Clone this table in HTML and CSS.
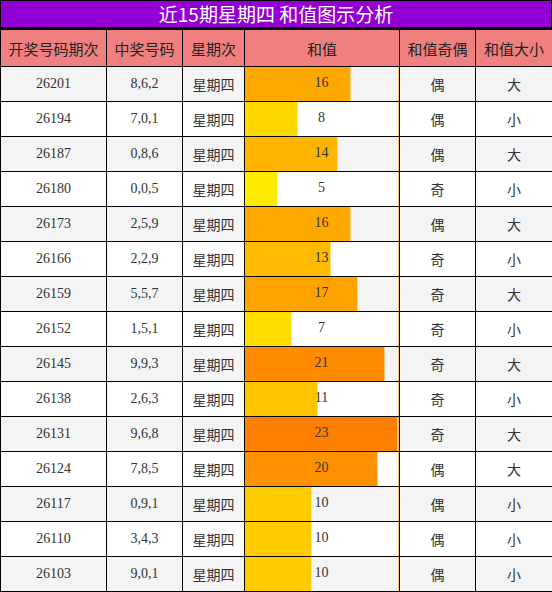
FILE: index.html
```html
<!DOCTYPE html>
<html lang="zh-CN">

<head>
  <meta charset="UTF-8">
  <title>近15期星期四 和值图示分析</title>
  <link rel="stylesheet" href="styles.css">
</head>

<body>
  <div class="board">
    <div class="title">近15期星期四 和值图示分析</div>
    <table class="stats">
      <colgroup>
        <col class="c-issue">
        <col class="c-code">
        <col class="c-day">
        <col class="c-sum">
        <col class="c-odd">
        <col class="c-size">
      </colgroup>
      <thead>
        <tr>
          <th>开奖号码期次</th>
          <th>中奖号码</th>
          <th>星期次</th>
          <th>和值</th>
          <th>和值奇偶</th>
          <th>和值大小</th>
        </tr>
      </thead>
      <tbody>
        <tr>
          <td class="num">26201</td><td class="num">8,6,2</td><td>星期四</td>
          <td class="sum"><div class="track"><span class="bar" style="--v:16"></span><span class="val">16</span></div></td>
          <td>偶</td><td>大</td>
        </tr>
        <tr>
          <td class="num">26194</td><td class="num">7,0,1</td><td>星期四</td>
          <td class="sum"><div class="track"><span class="bar" style="--v:8"></span><span class="val">8</span></div></td>
          <td>偶</td><td>小</td>
        </tr>
        <tr>
          <td class="num">26187</td><td class="num">0,8,6</td><td>星期四</td>
          <td class="sum"><div class="track"><span class="bar" style="--v:14"></span><span class="val">14</span></div></td>
          <td>偶</td><td>大</td>
        </tr>
        <tr>
          <td class="num">26180</td><td class="num">0,0,5</td><td>星期四</td>
          <td class="sum"><div class="track"><span class="bar" style="--v:5"></span><span class="val">5</span></div></td>
          <td>奇</td><td>小</td>
        </tr>
        <tr>
          <td class="num">26173</td><td class="num">2,5,9</td><td>星期四</td>
          <td class="sum"><div class="track"><span class="bar" style="--v:16"></span><span class="val">16</span></div></td>
          <td>偶</td><td>大</td>
        </tr>
        <tr>
          <td class="num">26166</td><td class="num">2,2,9</td><td>星期四</td>
          <td class="sum"><div class="track"><span class="bar" style="--v:13"></span><span class="val">13</span></div></td>
          <td>奇</td><td>小</td>
        </tr>
        <tr>
          <td class="num">26159</td><td class="num">5,5,7</td><td>星期四</td>
          <td class="sum"><div class="track"><span class="bar" style="--v:17"></span><span class="val">17</span></div></td>
          <td>奇</td><td>大</td>
        </tr>
        <tr>
          <td class="num">26152</td><td class="num">1,5,1</td><td>星期四</td>
          <td class="sum"><div class="track"><span class="bar" style="--v:7"></span><span class="val">7</span></div></td>
          <td>奇</td><td>小</td>
        </tr>
        <tr>
          <td class="num">26145</td><td class="num">9,9,3</td><td>星期四</td>
          <td class="sum"><div class="track"><span class="bar" style="--v:21"></span><span class="val">21</span></div></td>
          <td>奇</td><td>大</td>
        </tr>
        <tr>
          <td class="num">26138</td><td class="num">2,6,3</td><td>星期四</td>
          <td class="sum"><div class="track"><span class="bar" style="--v:11"></span><span class="val">11</span></div></td>
          <td>奇</td><td>小</td>
        </tr>
        <tr>
          <td class="num">26131</td><td class="num">9,6,8</td><td>星期四</td>
          <td class="sum"><div class="track"><span class="bar" style="--v:23"></span><span class="val">23</span></div></td>
          <td>奇</td><td>大</td>
        </tr>
        <tr>
          <td class="num">26124</td><td class="num">7,8,5</td><td>星期四</td>
          <td class="sum"><div class="track"><span class="bar" style="--v:20"></span><span class="val">20</span></div></td>
          <td>偶</td><td>大</td>
        </tr>
        <tr>
          <td class="num">26117</td><td class="num">0,9,1</td><td>星期四</td>
          <td class="sum"><div class="track"><span class="bar" style="--v:10"></span><span class="val">10</span></div></td>
          <td>偶</td><td>小</td>
        </tr>
        <tr>
          <td class="num">26110</td><td class="num">3,4,3</td><td>星期四</td>
          <td class="sum"><div class="track"><span class="bar" style="--v:10"></span><span class="val">10</span></div></td>
          <td>偶</td><td>小</td>
        </tr>
        <tr>
          <td class="num">26103</td><td class="num">9,0,1</td><td>星期四</td>
          <td class="sum"><div class="track"><span class="bar" style="--v:10"></span><span class="val">10</span></div></td>
          <td>偶</td><td>小</td>
        </tr>
      </tbody>
    </table>
  </div>
</body>

</html>
```

FILE: styles.css
```css
:root {
  --line: #000;
  --title-bg: #9400d3;
  --head-bg: #f08080;
  --row-alt: #f4f4f4;
  --text: #333;
  --max-sum: 23;
}

body {
  margin: 0;
  background: #fff;
  font-family: "Liberation Serif", "Noto Sans CJK SC", serif;
  color: var(--text);
}

.board {
  width: 552px;
}

.title {
  box-sizing: border-box;
  width: 552px;
  height: 29px;
  border: 1px solid var(--line);
  border-bottom-width: 2px;
  background: var(--title-bg);
  color: #fff;
  font-family: "Noto Sans CJK SC", sans-serif;
  font-size: 19px;
  line-height: 25px;
  text-align: center;
}

.stats {
  width: 552px;
  border-collapse: collapse;
  table-layout: fixed;
}

.c-issue { width: 106px; }
.c-code { width: 76px; }
.c-day { width: 62px; }
.c-sum { width: 155px; }
.c-odd { width: 76px; }
.c-size { width: 77px; }

.stats thead tr {
  height: 37px;
}

.stats tbody tr {
  height: 35px;
}

.stats th,
.stats td {
  border: 1px solid var(--line);
  padding: 0;
  text-align: center;
  font-family: "Noto Sans CJK SC", sans-serif;
  font-size: 15px;
}

.stats th {
  background: var(--head-bg);
  color: #222;
  font-weight: normal;
}

.stats td {
  font-size: 14px;
}

.stats tbody tr:nth-child(odd) td {
  background: var(--row-alt);
}

.stats td.num {
  font-family: "Liberation Serif", serif;
  font-size: 14px;
  line-height: 14px;
  padding-bottom: 1px;
}

.stats td.sum {
  font-family: "Liberation Serif", serif;
}

.track {
  position: relative;
  height: 34px;
  border-right: 1px solid #ffc96a;
}

.bar {
  position: absolute;
  left: 0;
  top: 0;
  bottom: 0;
  width: calc(var(--v) / var(--max-sum) * 100%);
  background: hsl(calc(55 - (var(--v) - 5) * 25 / 18) 100% 50%);
  box-shadow: inset -1px 0 rgba(255, 255, 255, 0.5);
}

.val {
  position: relative;
  display: block;
  font-size: 14px;
  line-height: 32px;
}
```
